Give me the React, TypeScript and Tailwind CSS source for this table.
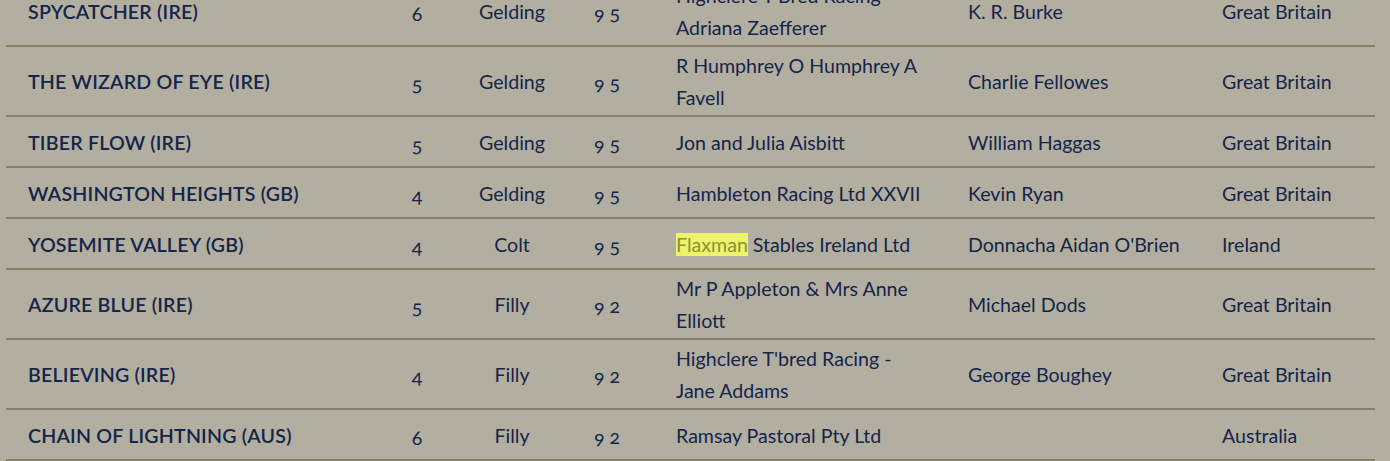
type Row = {
  name: string;
  age: string;
  sex: string;
  rating: string;
  owner: string[];
  trainer: string;
  country: string;
  highlight?: string;
};

const rows: Row[] = [
  { name: 'SPYCATCHER (IRE)', age: '6', sex: 'Gelding', rating: '9 5', owner: ["Highclere T'Bred Racing", 'Adriana Zaefferer'], trainer: 'K. R. Burke', country: 'Great Britain' },
  { name: 'THE WIZARD OF EYE (IRE)', age: '5', sex: 'Gelding', rating: '9 5', owner: ['R Humphrey O Humphrey A', 'Favell'], trainer: 'Charlie Fellowes', country: 'Great Britain' },
  { name: 'TIBER FLOW (IRE)', age: '5', sex: 'Gelding', rating: '9 5', owner: ['Jon and Julia Aisbitt'], trainer: 'William Haggas', country: 'Great Britain' },
  { name: 'WASHINGTON HEIGHTS (GB)', age: '4', sex: 'Gelding', rating: '9 5', owner: ['Hambleton Racing Ltd XXVII'], trainer: 'Kevin Ryan', country: 'Great Britain' },
  { name: 'YOSEMITE VALLEY (GB)', age: '4', sex: 'Colt', rating: '9 5', owner: ['Stables Ireland Ltd'], highlight: 'Flaxman', trainer: "Donnacha Aidan O'Brien", country: 'Ireland' },
  { name: 'AZURE BLUE (IRE)', age: '5', sex: 'Filly', rating: '9 2', owner: ['Mr P Appleton & Mrs Anne', 'Elliott'], trainer: 'Michael Dods', country: 'Great Britain' },
  { name: 'BELIEVING (IRE)', age: '4', sex: 'Filly', rating: '9 2', owner: ["Highclere T'bred Racing -", 'Jane Addams'], trainer: 'George Boughey', country: 'Great Britain' },
  { name: 'CHAIN OF LIGHTNING (AUS)', age: '6', sex: 'Filly', rating: '9 2', owner: ['Ramsay Pastoral Pty Ltd'], trainer: '', country: 'Australia' },
];

export default function App() {
  return (
    <div className="w-[1390px] h-[461px] overflow-hidden bg-[#b2afa0] text-[#15244b] font-['Lato',sans-serif] text-[19.6px] leading-[32px]">
      <div className="ml-[6px] w-[1369px] -mt-[23px]">
        {rows.map((r) => (
          <div
            key={r.name}
            className="grid grid-cols-[359px_60px_130px_99px_292px_254px_1fr] items-center pl-[22px] pt-[3px] pb-[1px] min-h-[51px] border-b-2 border-[#878067]"
          >
            <div className="font-semibold tracking-[0.2px]">{r.name}</div>
            <div className="text-center oldstyle-nums pt-[4px]">{r.age}</div>
            <div className="text-center">{r.sex}</div>
            <div className="pl-[17px] oldstyle-nums pt-[2px]">{r.rating}</div>
            <div className="whitespace-nowrap">
              {r.owner.map((line, i) => (
                <div key={i}>
                  {i === 0 && r.highlight && (
                    <>
                      <span className="bg-[#eef36c] text-[#8c9036]">{r.highlight}</span>{' '}
                    </>
                  )}
                  {line}
                </div>
              ))}
            </div>
            <div>{r.trainer}</div>
            <div>{r.country}</div>
          </div>
        ))}
      </div>
    </div>
  );
}
